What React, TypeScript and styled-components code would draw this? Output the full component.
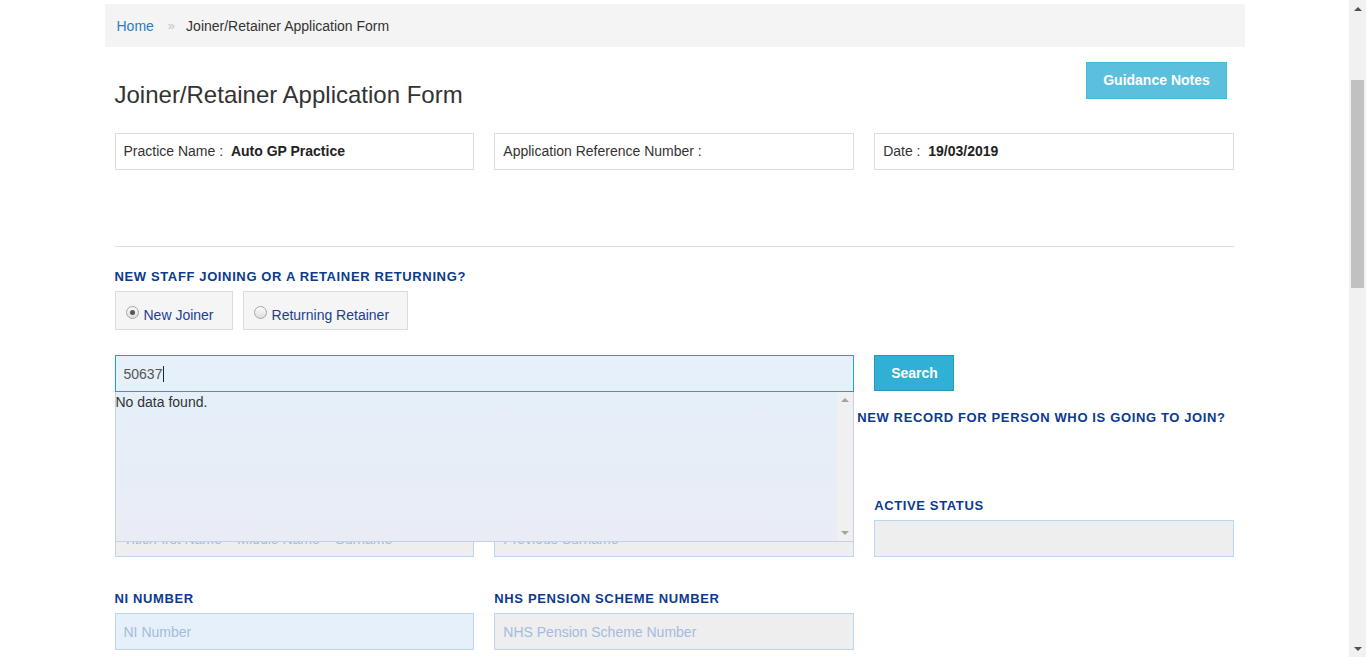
import { createGlobalStyle, styled } from "styled-components";

const GlobalStyle = createGlobalStyle`
  html, body {
    margin: 0;
    padding: 0;
    overflow: hidden;
    background: #fff;
  }
  body {
    font-family: "Liberation Sans", Arial, sans-serif;
    font-size: 14px;
    color: #333;
  }
`;

const Screen = styled.div`
  display: flex;
  height: 657px;
  width: 1366px;
`;

const Viewport = styled.div`
  flex: 1;
  height: 657px;
  overflow: hidden;
`;

const Container = styled.div`
  width: 1170px;
  margin: 0 auto;
  padding: 0 15px;
  box-sizing: border-box;
`;

const Breadcrumb = styled.ol`
  list-style: none;
  margin: 4px 0 0;
  padding: 0 12px;
  height: 43px;
  background: #f4f4f4;
  display: flex;
  align-items: center;
  font-size: 14px;

  a {
    color: #2a7dc6;
    text-decoration: none;
  }
  .sep {
    color: #c4c4c4;
    padding: 0 11px 0 14px;
    font-size: 13px;
  }
`;

const FormWrap = styled.div`
  padding: 0 10.5px 0 10px;
`;

const Header = styled.div`
  display: flex;
  justify-content: space-between;
  align-items: flex-start;
  height: 86px;
`;

const Title = styled.h1`
  margin: 35px 0 0;
  font-size: 24px;
  line-height: 26px;
  font-weight: normal;
  color: #333;
`;

const Button = styled.button<{ $tone?: "info" | "primary" }>`
  font-family: inherit;
  font-size: 14px;
  font-weight: bold;
  color: #fff;
  border: 1px solid ${(p) => (p.$tone === "primary" ? "#269abc" : "#46b8da")};
  background: ${(p) => (p.$tone === "primary" ? "#31b0d5" : "#5bc0de")};
  height: 37px;
  padding: 0 16px 1px;
  cursor: pointer;
`;

const GuidanceButton = styled(Button)`
  margin: 15px 7px 0 0;
  width: 141px;
  padding-bottom: 2px;
`;

const Grid = styled.div`
  display: grid;
  grid-template-columns: repeat(3, 1fr);
  column-gap: 20px;
`;

const InfoBox = styled.div`
  border: 1px solid #ddd;
  height: 37px;
  box-sizing: border-box;
  padding: 0 8px 1px;
  display: flex;
  align-items: center;
  white-space: pre;

  b {
    color: #222;
  }
`;

const Rule = styled.hr`
  border: 0;
  border-top: 1px solid #dedede;
  margin: 76px 0 0;
`;

const Label = styled.div<{ $shift?: number }>`
  font-size: 13px;
  font-weight: bold;
  color: #0b3a8f;
  letter-spacing: 0.63px;
  line-height: 16px;
  margin-left: ${(p) => p.$shift ?? 0}px;
  white-space: nowrap;
`;

const Section = styled.div<{ $top: number }>`
  margin-top: ${(p) => p.$top}px;
`;

const RadioGroup = styled.div`
  display: flex;
  gap: 10px;
  margin-top: 6px;
`;

const RadioBox = styled.label`
  display: flex;
  align-items: center;
  height: 39px;
  box-sizing: border-box;
  padding: 8px 18px 0 10px;
  background: #f5f5f5;
  border: 1px solid #dcdcdc;
  color: #1e3f91;
  font-size: 14px;
`;

const RadioDot = styled.span<{ $checked?: boolean }>`
  width: 11px;
  height: 11px;
  border-radius: 50%;
  border: 1px solid #a6a6a6;
  background: linear-gradient(#fafafa, #dedede);
  margin: -4px 5px 0 0;
  display: flex;
  align-items: center;
  justify-content: center;

  &::after {
    content: "";
    width: 5px;
    height: 5px;
    border-radius: 50%;
    background: ${(p) => (p.$checked ? "#555" : "transparent")};
  }
`;

const SearchRow = styled(Grid)`
  margin-top: 25px;
`;

const SearchField = styled.div`
  grid-column: span 2;
  position: relative;
`;

const SearchInput = styled.div`
  height: 37px;
  box-sizing: border-box;
  border: 1px solid #17a8c8;
  background: #e6f0fa;
  padding: 0 8px;
  display: flex;
  align-items: center;
  color: #555;
  font-size: 14px;

  .caret {
    width: 1px;
    height: 16px;
    background: #222;
    margin-left: 1px;
  }
`;

const SearchButton = styled(Button)`
  width: 80px;
  height: 36px;
`;

const Dropdown = styled.div`
  position: absolute;
  top: 37px;
  left: 0;
  right: 0;
  height: 150px;
  box-sizing: border-box;
  border: 1px solid #c6d0e7;
  border-top: 0;
  background: linear-gradient(#e5eff9, #e9ecf5);
  display: flex;
  z-index: 5;
`;

const DropdownList = styled.div`
  flex: 1;
  padding: 2px 0 0 0;
  color: #333;
  font-size: 14px;
  line-height: 16px;
`;

const MiniScroll = styled.div`
  width: 16px;
  background: #f0f0f0;
  display: flex;
  flex-direction: column;
  justify-content: space-between;
  align-items: center;
  padding: 6px 0;
`;

const Arrow = styled.span<{ $down?: boolean; $size?: number; $color?: string }>`
  width: 0;
  height: 0;
  border-left: ${(p) => p.$size ?? 4}px solid transparent;
  border-right: ${(p) => p.$size ?? 4}px solid transparent;
  ${(p) =>
    p.$down
      ? `border-top: ${p.$size ?? 4}px solid ${p.$color ?? "#a3a3a3"};`
      : `border-bottom: ${p.$size ?? 4}px solid ${p.$color ?? "#a3a3a3"};`}
`;

const Field = styled.div`
  display: flex;
  flex-direction: column;
  gap: 6px;
`;

const Input = styled.div<{ $disabled?: boolean }>`
  height: 37px;
  box-sizing: border-box;
  border: 1px solid #b9d6f2;
  background: ${(p) => (p.$disabled ? "#eeeeee" : "#e6f0fa")};
  padding: 0 8px;
  display: flex;
  align-items: center;
  color: #a4bbe0;
  font-size: 14px;
  white-space: nowrap;
  overflow: hidden;
`;

const PageScrollbar = styled.div`
  width: 17px;
  background: #f1f1f1;
  display: flex;
  flex-direction: column;
  align-items: center;
`;

const ScrollButton = styled.div`
  height: 17px;
  width: 17px;
  display: flex;
  align-items: center;
  justify-content: center;
`;

const ScrollTrack = styled.div`
  flex: 1;
  width: 100%;
  display: flex;
  justify-content: center;
`;

const Thumb = styled.div<{ $offset: number; $length: number }>`
  width: 13px;
  margin-top: ${(p) => p.$offset}px;
  height: ${(p) => p.$length}px;
  background: #c1c1c1;
`;

export default function App() {
  return (
    <>
      <GlobalStyle />
      <Screen>
        <Viewport>
          <Container>
            <Breadcrumb>
              <li>
                <a href="#">Home</a>
              </li>
              <li className="sep">»</li>
              <li>Joiner/Retainer Application Form</li>
            </Breadcrumb>

            <FormWrap>
              <Header>
                <Title>Joiner/Retainer Application Form</Title>
                <GuidanceButton>Guidance Notes</GuidanceButton>
              </Header>

              <Grid>
                <InfoBox>
                  Practice Name :  <b>Auto GP Practice</b>
                </InfoBox>
                <InfoBox>Application Reference Number :</InfoBox>
                <InfoBox>
                  Date :  <b>19/03/2019</b>
                </InfoBox>
              </Grid>

              <Rule />

              <Section $top={22}>
                <Label>NEW STAFF JOINING OR A RETAINER RETURNING?</Label>
                <RadioGroup>
                  <RadioBox>
                    <RadioDot $checked />
                    New Joiner
                  </RadioBox>
                  <RadioBox>
                    <RadioDot />
                    Returning Retainer
                  </RadioBox>
                </RadioGroup>
              </Section>

              <SearchRow>
                <SearchField>
                  <SearchInput>
                    50637<span className="caret" />
                  </SearchInput>
                  <Dropdown>
                    <DropdownList>No data found.</DropdownList>
                    <MiniScroll>
                      <Arrow $size={4} />
                      <Arrow $down $size={4} />
                    </MiniScroll>
                  </Dropdown>
                </SearchField>
                <SearchButton $tone="primary">Search</SearchButton>
              </SearchRow>

              <Section $top={18}>
                <Grid>
                  <div />
                  <div />
                  <Label $shift={-17}>NEW RECORD FOR PERSON WHO IS GOING TO JOIN?</Label>
                </Grid>
                <RadioGroup>
                  <RadioBox>
                    <RadioDot />
                    Yes
                  </RadioBox>
                  <RadioBox>
                    <RadioDot />
                    No
                  </RadioBox>
                </RadioGroup>
              </Section>

              <Section $top={27}>
                <Grid>
                  <Field>
                    <Label>FULL NAME</Label>
                    <Input $disabled>
                      Title/First Name – Middle Name – Surname
                    </Input>
                  </Field>
                  <Field>
                    <Label>PREVIOUS SURNAME</Label>
                    <Input $disabled>Previous Surname</Input>
                  </Field>
                  <Field>
                    <Label>ACTIVE STATUS</Label>
                    <Input $disabled />
                  </Field>
                </Grid>
              </Section>

              <Section $top={34}>
                <Grid>
                  <Field>
                    <Label>NI NUMBER</Label>
                    <Input>NI Number</Input>
                  </Field>
                  <Field>
                    <Label>NHS PENSION SCHEME NUMBER</Label>
                    <Input $disabled>NHS Pension Scheme Number</Input>
                  </Field>
                </Grid>
              </Section>
            </FormWrap>
          </Container>
        </Viewport>

        <PageScrollbar>
          <ScrollButton>
            <Arrow $size={4} $color="#505050" />
          </ScrollButton>
          <ScrollTrack>
            <Thumb $offset={63} $length={208} />
          </ScrollTrack>
          <ScrollButton>
            <Arrow $down $size={4} $color="#505050" />
          </ScrollButton>
        </PageScrollbar>
      </Screen>
    </>
  );
}
